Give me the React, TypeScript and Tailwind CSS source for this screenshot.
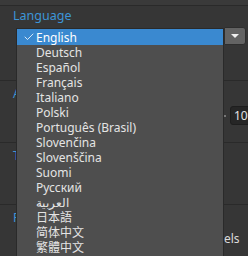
import { Check } from "lucide-react";

const languages = [
  "English",
  "Deutsch",
  "Español",
  "Français",
  "Italiano",
  "Polski",
  "Português (Brasil)",
  "Slovenčina",
  "Slovenščina",
  "Suomi",
  "Русский",
  "العربية",
  "日本語",
  "简体中文",
  "繁體中文",
];

function Section({ title, children }: { title: string; children?: React.ReactNode }) {
  return (
    <div className="h-[62px] border-t border-[#2a2a2a] px-[13px] pt-[5px] relative">
      <p className="text-[12px] leading-[16px] text-[#3d95d6]">{title}</p>
      {children}
    </div>
  );
}

export default function App() {
  return (
    <div
      className="relative w-[248px] h-[256px] overflow-hidden bg-[#363636] text-[#e4e4e4]"
      style={{ fontFamily: '"Noto Sans", "Noto Sans CJK SC", sans-serif' }}
    >
      <div className="h-[5px] bg-[#3a3a3a]" />
      {/* settings page behind the open menu */}
      <div className="h-[75px] border-t border-[#2a2a2a] px-[13px] pt-[2px]">
        <p className="text-[12.5px] leading-[16px] text-[#3d95d6]">Language</p>
      </div>
      <Section title="Appearance">
        <div className="absolute left-[224px] top-[25px] flex items-center gap-[4px]">
          <span className="w-[2px] h-[2px] bg-[#777]" />
          <span className="h-[19px] px-[3px] rounded-[3px] bg-[#262626] border border-[#1e1e1e] text-[12px] leading-[17px]">
            100
          </span>
        </div>
      </Section>
      <Section title="Toolbar" />
      <Section title="Font">
        <span className="absolute left-[224px] top-[27px] text-[12px] leading-[14px] text-[#dcdcdc]">
          els
        </span>
      </Section>

      {/* open language dropdown */}
      <div className="absolute left-[16px] top-[28px] w-[208px] h-[232px] bg-[#4e4e4e] border border-[#2a2a2a]">
        {languages.map((lang, i) => (
          <div
            key={lang}
            className={`flex items-center text-[12px] leading-[15px] overflow-hidden ${
              i === 0 ? "bg-[#3a89d0] text-white h-[16px]" : "h-[15px]"
            }`}
          >
            <span className="w-[19px] flex justify-center">
              {i === 0 && <Check size={12} strokeWidth={1.6} className="ml-[4px]" />}
            </span>
            <span dir="auto">{lang}</span>
          </div>
        ))}
      </div>
      <div className="absolute left-[224px] top-[27px] w-[22px] h-[18px] rounded-r-[3px] rounded-l-[1px] bg-[#636363] border border-[#2e2e2e] flex items-center justify-center">
        <svg width="8" height="4" viewBox="0 0 8 4">
          <polygon points="0,0 8,0 4,4" fill="#f0f0f0" />
        </svg>
      </div>
    </div>
  );
}
